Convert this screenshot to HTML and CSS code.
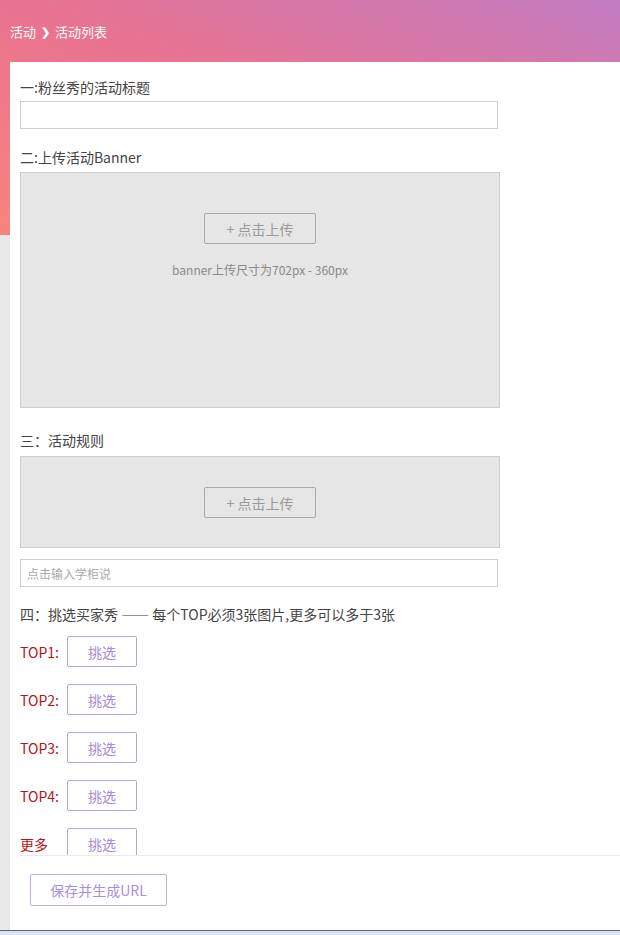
FILE: index.html
```html
<!DOCTYPE html>
<html lang="zh-CN">
<head>
<meta charset="utf-8">
<title>活动列表</title>
<link rel="stylesheet" href="styles.css">
</head>
<body>
<div class="page">
  <div class="header">
    <span class="crumb">活动</span>
    <span class="crumb-sep">❯</span>
    <span class="crumb">活动列表</span>
  </div>
  <div class="panel">
    <div class="scroll">
      <div class="label">一:粉丝秀的活动标题</div>
      <div class="input"></div>

      <div class="label label-gap">二:上传活动Banner</div>
      <div class="upload-box banner-box">
        <div class="upload-btn">+ 点击上传</div>
        <div class="hint">banner上传尺寸为702px - 360px</div>
      </div>

      <div class="label label-gap3">三：活动规则</div>
      <div class="upload-box rules-box">
        <div class="upload-btn">+ 点击上传</div>
      </div>
      <div class="input input-rules"><span class="placeholder">点击输入学柜说</span></div>

      <div class="label label-gap4">四：挑选买家秀 —— 每个TOP必须3张图片,更多可以多于3张</div>
      <div class="tops">
        <div class="top-row"><span class="top-label">TOP1:</span><span class="pick-btn">挑选</span></div>
        <div class="top-row"><span class="top-label">TOP2:</span><span class="pick-btn">挑选</span></div>
        <div class="top-row"><span class="top-label">TOP3:</span><span class="pick-btn">挑选</span></div>
        <div class="top-row"><span class="top-label">TOP4:</span><span class="pick-btn">挑选</span></div>
        <div class="top-row"><span class="top-label">更多</span><span class="pick-btn">挑选</span></div>
      </div>
    </div>
    <div class="divider"></div>
    <div class="footer">
      <span class="save-btn">保存并生成URL</span>
    </div>
  </div>
  <div class="taskbar"></div>
</div>
</body>
</html>
```
FILE: styles.css
```css
* { box-sizing: border-box; }
html, body { margin: 0; padding: 0; }
body {
  font-family: "Noto Sans CJK SC", "Noto Sans", "Liberation Sans", sans-serif;
  font-size: 14px;
  color: #444;
  background: #fff;
}
.page {
  width: 620px;
  height: 935px;
  overflow: hidden;
  background-color: #e8e8e8;
  background-image: linear-gradient(to top right, #f8837d 0%, #e9738f 50%, #c27cc2 100%);
  background-size: 100% 235px;
  background-repeat: no-repeat;
  display: flex;
  flex-direction: column;
}
.header {
  height: 62px;
  padding-left: 10px;
  display: flex;
  align-items: center;
  gap: 5px;
  color: #fff;
  font-size: 13px;
}
.crumb-sep { font-size: 11px; font-weight: bold; }
.panel {
  margin-left: 10px;
  height: 868px;
  background: #fff;
  display: flex;
  flex-direction: column;
}
.scroll {
  height: 793px;
  overflow: hidden;
  padding: 16px 10px 0 10px;
}
.label {
  line-height: 18px;
  height: 18px;
  color: #444;
  white-space: nowrap;
}
.label-gap { margin-top: 19px; }
.label-gap3 { margin-top: 23px; }
.label-gap4 { margin-top: 18px; }
.input {
  margin-top: 5px;
  width: 478px;
  height: 28px;
  border: 1px solid #cfcfcf;
  background: #fff;
  display: flex;
  align-items: center;
  padding-left: 6px;
}
.input-rules { margin-top: 11px; }
.placeholder { font-size: 12px; color: #a9a9a9; }
.upload-box {
  width: 480px;
  background: #e6e6e6;
  border: 1px solid #cdcdcd;
  display: flex;
  flex-direction: column;
  align-items: center;
}
.banner-box { margin-top: 6px; height: 236px; padding-top: 40px; }
.rules-box { margin-top: 7px; height: 92px; padding-top: 30px; }
.upload-btn {
  width: 112px;
  height: 31px;
  border: 1px solid #a9a9a9;
  border-radius: 2px;
  display: flex;
  align-items: center;
  justify-content: center;
  color: #9a9a9a;
  font-size: 14px;
}
.hint {
  margin-top: 18px;
  line-height: 16px;
  font-size: 12px;
  color: #8a8a8a;
}
.tops {
  margin-top: 13px;
  display: flex;
  flex-direction: column;
  gap: 17px;
}
.top-row {
  display: flex;
  align-items: center;
  height: 31px;
}
.top-label {
  width: 47px;
  color: #b8141a;
  font-size: 14px;
}
.pick-btn {
  width: 70px;
  height: 31px;
  border: 1px solid #b89ee6;
  border-radius: 2px;
  display: flex;
  align-items: center;
  justify-content: center;
  color: #a68ad9;
  font-size: 14px;
}
.divider {
  margin-left: 10px;
  height: 1px;
  background: #ebebeb;
}
.footer {
  flex: 1;
  padding: 18px 0 0 20px;
}
.save-btn {
  display: inline-flex;
  align-items: center;
  justify-content: center;
  width: 137px;
  height: 32px;
  border: 1px solid #c2aaea;
  border-radius: 2px;
  color: #a88ee0;
  font-size: 14px;
}
.taskbar {
  height: 5px;
  border-top: 1px solid #5d6672;
  background: #d8e5f4;
}
```
